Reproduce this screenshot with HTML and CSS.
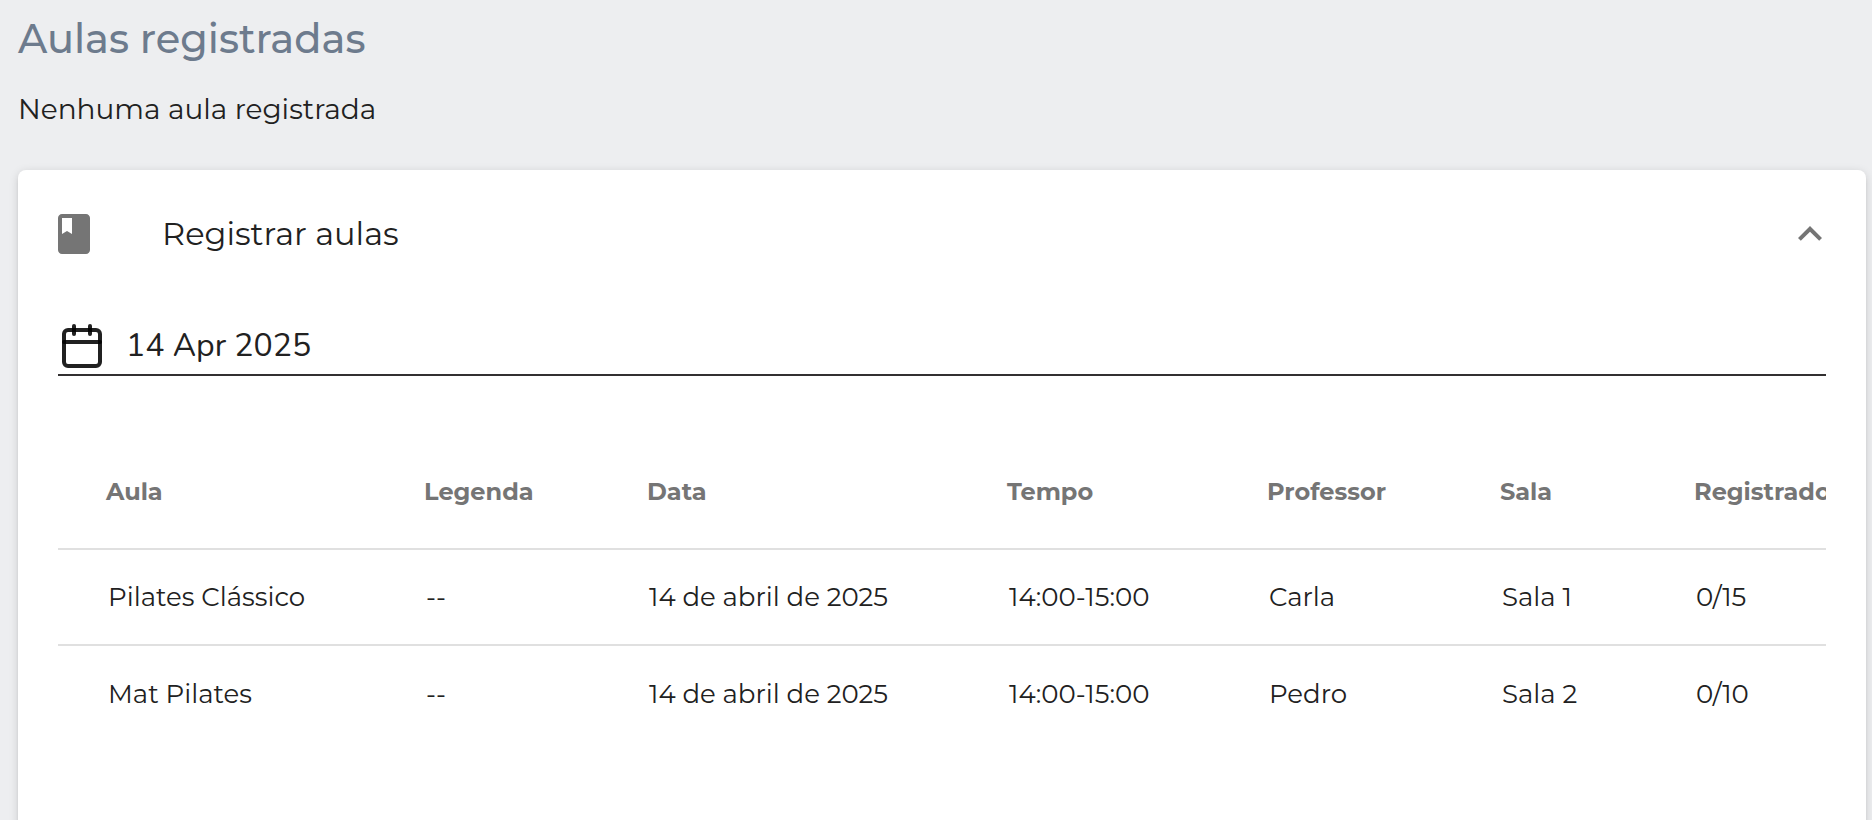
FILE: index.html
```html
<!DOCTYPE html>
<html lang="pt">
<head>
  <meta charset="UTF-8">
  <meta name="viewport" content="width=device-width, initial-scale=1">
  <title>Aulas registradas</title>
  <link rel="stylesheet" href="styles.css">
</head>
<body>
  <main class="page">
    <h1 class="page-title">Aulas registradas</h1>
    <p class="page-message">Nenhuma aula registrada</p>

    <section class="card">
      <button class="card-header" type="button" aria-expanded="true" aria-controls="registrar">
        <svg class="icon icon-gray" viewBox="0 0 24 24" aria-hidden="true">
          <path d="M18 2H6c-1.1 0-2 .9-2 2v16c0 1.1.9 2 2 2h12c1.1 0 2-.9 2-2V4c0-1.1-.9-2-2-2zM6 4h5v8l-2.5-1.5L6 12V4z"/>
        </svg>
        <span class="card-title">Registrar aulas</span>
        <svg class="icon icon-gray" viewBox="0 0 24 24" aria-hidden="true">
          <path d="M12 8l-6 6 1.41 1.41L12 10.83l4.59 4.58L18 14z"/>
        </svg>
      </button>

      <div class="card-body" id="registrar">
        <label class="date-field">
          <svg class="icon icon-calendar" viewBox="0 0 24 24" aria-hidden="true">
            <rect x="3" y="4" width="18" height="18" rx="2"/>
            <line x1="16" y1="2" x2="16" y2="6"/>
            <line x1="8" y1="2" x2="8" y2="6"/>
            <line x1="3" y1="10" x2="21" y2="10"/>
          </svg>
          <input class="date-input" type="text" value="14 Apr 2025" aria-label="Data">
        </label>

        <div class="table-wrap">
          <table class="classes">
            <colgroup>
              <col class="col-aula">
              <col class="col-legenda">
              <col class="col-data">
              <col class="col-tempo">
              <col class="col-professor">
              <col class="col-sala">
              <col class="col-registrados">
            </colgroup>
            <thead>
              <tr>
                <th>Aula</th>
                <th>Legenda</th>
                <th>Data</th>
                <th>Tempo</th>
                <th>Professor</th>
                <th>Sala</th>
                <th>Registrados</th>
              </tr>
            </thead>
            <tbody>
              <tr>
                <td>Pilates Clássico</td>
                <td>--</td>
                <td>14 de abril de 2025</td>
                <td>14:00-15:00</td>
                <td>Carla</td>
                <td>Sala 1</td>
                <td>0/15</td>
              </tr>
              <tr>
                <td>Mat Pilates</td>
                <td>--</td>
                <td>14 de abril de 2025</td>
                <td>14:00-15:00</td>
                <td>Pedro</td>
                <td>Sala 2</td>
                <td>0/10</td>
              </tr>
            </tbody>
          </table>
        </div>
      </div>
    </section>
  </main>
</body>
</html>
```

FILE: styles.css
```css
* {
  box-sizing: border-box;
}

body {
  margin: 0;
  height: 100vh;
  overflow: hidden;
  background-color: #edeef0;
  color: #212121;
  font-family: Montserrat, Inter, sans-serif;
}

.page {
  display: flex;
  flex-direction: column;
  min-height: 100vh;
  padding: 15px 6px 0 18px;
}

.page-title {
  margin: 0;
  color: #6d7b8d;
  font-size: 40px;
  font-weight: 500;
  line-height: 48px;
}

.page-message {
  margin: 26px 0 41px;
  font-size: 28px;
  line-height: 40px;
}

.card {
  flex: 1 0 auto;
  padding: 0 40px 100px;
  border-radius: 8px;
  background-color: #fff;
  box-shadow: 0 4px 4px -2px rgba(0, 0, 0, 0.2), 0 2px 10px rgba(0, 0, 0, 0.14);
}

/* Cabecera del acordeón */
.card-header {
  display: flex;
  align-items: center;
  width: calc(100% + 16px);
  height: 128px;
  margin: 0 -8px;
  padding: 0;
  border: none;
  background: none;
  color: inherit;
  font-family: inherit;
  text-align: left;
  cursor: pointer;
}

.card-title {
  flex: 1;
  padding-left: 64px;
  font-size: 32px;
  line-height: 40px;
}

.icon {
  flex: none;
  width: 48px;
  height: 48px;
}

.icon-gray {
  fill: #757575;
}

.icon-calendar {
  fill: none;
  stroke: rgba(0, 0, 0, 0.87);
  stroke-width: 2;
  stroke-linecap: round;
  stroke-linejoin: round;
}

/* Campo de fecha */
.date-field {
  display: flex;
  align-items: center;
  margin-top: 20px;
  padding: 4px 0;
  border-bottom: 2px solid #323031;
}

.date-input {
  flex: 1;
  min-width: 0;
  height: 48px;
  padding: 0 0 2px 20px;
  border: none;
  outline: none;
  background: none;
  color: #212121;
  font-family: Nunito, "Open Sans", sans-serif;
  font-size: 32px;
}

.table-wrap {
  margin-top: 60px;
  overflow: hidden;
}

.classes {
  width: max-content;
  min-width: 100%;
  table-layout: fixed;
  border-collapse: separate;
  border-spacing: 0;
  text-align: left;
  white-space: nowrap;
}

.classes th,
.classes td {
  border-bottom: 2px solid #e0e0e0;
}

.classes th {
  height: 114px;
  padding: 0 0 2px 48px;
  color: #757575;
  font-size: 24px;
  font-weight: 700;
}

.classes td {
  height: 96px;
  padding: 0 0 0 50px;
  font-size: 26px;
}

.classes tbody tr:last-child td {
  border-bottom: none;
}

.col-aula { width: 318px; }
.col-legenda { width: 223px; }
.col-data { width: 360px; }
.col-tempo { width: 260px; }
.col-professor { width: 233px; }
.col-sala { width: 194px; }
.col-registrados { width: 260px; }
```
